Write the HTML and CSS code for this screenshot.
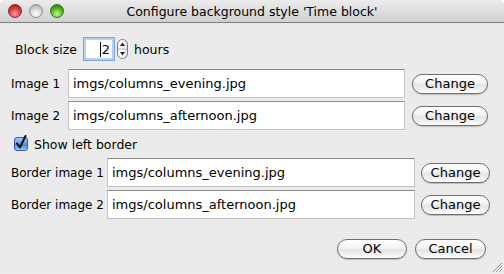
FILE: index.html
```html
<!DOCTYPE html>
<html lang="en">
<head>
  <meta charset="UTF-8">
  <title>Configure background style 'Time block'</title>
  <link rel="stylesheet" href="styles.css">
</head>
<body>
  <div class="window">
    <div class="titlebar">
      <div class="lights">
        <span class="light light-red"></span>
        <span class="light light-gray"></span>
        <span class="light light-green"></span>
      </div>
      <div class="title">Configure background style 'Time block'</div>
      <div class="lights-spacer"></div>
    </div>

    <div class="content">
      <div class="row size-row">
        <span class="label">Block size</span>
        <div class="spin-field"><span class="caret"></span>2</div>
        <svg class="stepper" viewBox="0 0 11 20" width="11" height="20">
          <defs>
            <linearGradient id="stepGrad" x1="0" y1="0" x2="1" y2="0">
              <stop offset="0" stop-color="#f4f4f4"/>
              <stop offset="0.5" stop-color="#ffffff"/>
              <stop offset="1" stop-color="#e2e2e2"/>
            </linearGradient>
          </defs>
          <rect x="0.5" y="0.5" width="10" height="19" rx="5" fill="url(#stepGrad)" stroke="#7a7a7a"/>
          <line x1="1" y1="10" x2="10" y2="10" stroke="#b5b5b5"/>
          <path d="M5.5 3.5 L8 7 L3 7 Z" fill="#222"/>
          <path d="M5.5 16.5 L8 13 L3 13 Z" fill="#222"/>
        </svg>
        <span class="label">hours</span>
      </div>

      <div class="file-group image-group">
        <div class="row file-row">
          <span class="label">Image 1</span>
          <div class="field">imgs/columns_evening.jpg</div>
          <button class="aqua-btn">Change</button>
        </div>
        <div class="row file-row">
          <span class="label">Image 2</span>
          <div class="field">imgs/columns_afternoon.jpg</div>
          <button class="aqua-btn">Change</button>
        </div>
      </div>

      <div class="row check-row">
        <svg class="checkbox" viewBox="0 0 14 16" width="14" height="16">
          <defs>
            <linearGradient id="checkGrad" x1="0" y1="0" x2="0" y2="1">
              <stop offset="0" stop-color="#a9cdf3"/>
              <stop offset="0.5" stop-color="#5d9be3"/>
              <stop offset="0.55" stop-color="#3f86dc"/>
              <stop offset="1" stop-color="#9fd0f7"/>
            </linearGradient>
          </defs>
          <rect x="0.5" y="2.5" width="13" height="13" rx="2.5" fill="url(#checkGrad)" stroke="#3a5f96"/>
          <path d="M3 8.5 L6 12.5 L11.5 1" fill="none" stroke="#111" stroke-width="2" stroke-linecap="round" stroke-linejoin="round"/>
        </svg>
        <span class="label">Show left border</span>
      </div>

      <div class="file-group border-group">
        <div class="row file-row">
          <span class="label">Border image 1</span>
          <div class="field">imgs/columns_evening.jpg</div>
          <button class="aqua-btn">Change</button>
        </div>
        <div class="row file-row">
          <span class="label">Border image 2</span>
          <div class="field">imgs/columns_afternoon.jpg</div>
          <button class="aqua-btn">Change</button>
        </div>
      </div>

      <div class="row actions">
        <button class="aqua-btn btn-ok">OK</button>
        <button class="aqua-btn btn-cancel">Cancel</button>
      </div>
    </div>

    <svg class="grip" viewBox="0 0 11 11" width="11" height="11">
      <path d="M10 1 L1 10 M10 4 L4 10 M10 7 L7 10" stroke="#8d8d8d" stroke-width="1"/>
      <path d="M10 2 L2 10 M10 5 L5 10 M10 8 L8 10" stroke="#ffffff" stroke-width="1"/>
    </svg>
  </div>
</body>
</html>
```

FILE: styles.css
```css
* {
  margin: 0;
  padding: 0;
  box-sizing: border-box;
}

body {
  width: 504px;
  height: 274px;
  background-color: #ffffff;
  font-family: 'DejaVu Sans', 'Liberation Sans', sans-serif;
  font-size: 13px;
  color: #000;
  overflow: hidden;
}

.window {
  position: relative;
  width: 504px;
  height: 274px;
  background: repeating-linear-gradient(to bottom, #eeeeee 0, #eeeeee 1px, #e8e8e8 1px, #e8e8e8 2px);
  border-radius: 5px 5px 0 0;
}

/* title bar */

.titlebar {
  display: flex;
  align-items: center;
  height: 23px;
  background: linear-gradient(to bottom, #ececec, #d0d0d0);
  border-bottom: 1px solid #7e7e7e;
  border-radius: 5px 5px 0 0;
}

.lights {
  display: flex;
  gap: 7px;
  width: 64px;
  padding-left: 8px;
}

.lights-spacer {
  width: 64px;
}

.light {
  width: 14px;
  height: 14px;
  border-radius: 50%;
}

.light-red {
  background: radial-gradient(circle at 50% 75%, #f8a0a0 0, #e04a4a 45%, #a01212 90%);
  border: 1px solid #8a2a2a;
}

.light-gray {
  background: radial-gradient(circle at 50% 75%, #ffffff 0, #dcdcdc 45%, #a8a8a8 90%);
  border: 1px solid #8e8e8e;
}

.light-green {
  background: radial-gradient(circle at 50% 75%, #c8f59a 0, #5cc22a 45%, #2a7a0c 90%);
  border: 1px solid #3a6e22;
}

.title {
  flex: 1;
  text-align: center;
  font-size: 12.5px;
  white-space: nowrap;
}

/* dialog body */

.content {
  display: flex;
  flex-direction: column;
}

.row {
  display: flex;
  align-items: center;
}

.label {
  flex-shrink: 0;
  font-size: 12px;
  white-space: nowrap;
}

.size-row {
  margin-top: 14px;
  height: 24px;
  padding-left: 15px;
}

.size-row .label {
  font-size: 12.5px;
}

.size-row .label:first-child {
  margin-right: 6px;
}

.spin-field {
  display: flex;
  flex-shrink: 0;
  align-items: center;
  justify-content: flex-end;
  width: 32px;
  height: 24px;
  padding-right: 4px;
  background-color: #fff;
  border: 1px solid #7fa4d6;
  box-shadow: inset 0 0 0 2px #b6d2f2;
}

.caret {
  width: 1px;
  height: 15px;
  background-color: #000;
  margin-right: 1px;
}

.stepper {
  flex-shrink: 0;
  margin-left: 2px;
  margin-right: 6px;
}

.file-group {
  display: flex;
  flex-direction: column;
  gap: 3px;
}

.image-group {
  margin-top: 8px;
}

.file-row {
  height: 29px;
  padding-left: 11px;
}

.field {
  display: flex;
  flex-shrink: 0;
  align-items: center;
  height: 29px;
  padding-left: 4px;
  background-color: #fff;
  border: 1px solid #c2c2c2;
  border-top-color: #8c8c8c;
  white-space: nowrap;
  overflow: hidden;
}

.image-group .label {
  width: 57px;
}

.image-group .field {
  width: 337px;
  margin-right: 7px;
}

.image-group .aqua-btn {
  width: 76px;
}

.border-group {
  margin-top: 6px;
}

.border-group .label {
  width: 96px;
}

.border-group .field {
  width: 308px;
  margin-right: 6px;
}

.border-group .aqua-btn {
  width: 69px;
}

.check-row {
  margin-top: 6px;
  height: 16px;
  padding-left: 14px;
}

.check-row .label {
  font-size: 12.5px;
}

.checkbox {
  flex-shrink: 0;
  margin-right: 6px;
  margin-top: -3px;
}

/* aqua push buttons */

.aqua-btn {
  flex-shrink: 0;
  height: 20px;
  border: 1px solid #6f6f6f;
  border-radius: 10px;
  background: linear-gradient(to bottom, #ffffff 0%, #f3f3f3 45%, #e4e4e4 55%, #f4f4f4 85%, #ffffff 100%);
  box-shadow: 0 1px 1px rgba(0, 0, 0, 0.2);
  font-family: inherit;
  font-size: 13px;
  color: #000;
  line-height: 16px;
}

.actions {
  justify-content: flex-end;
  gap: 8px;
  margin-top: 20px;
  padding-right: 18px;
}

.btn-ok {
  width: 70px;
}

.btn-cancel {
  width: 71px;
}

.grip {
  position: absolute;
  right: 1px;
  bottom: 1px;
}
```
